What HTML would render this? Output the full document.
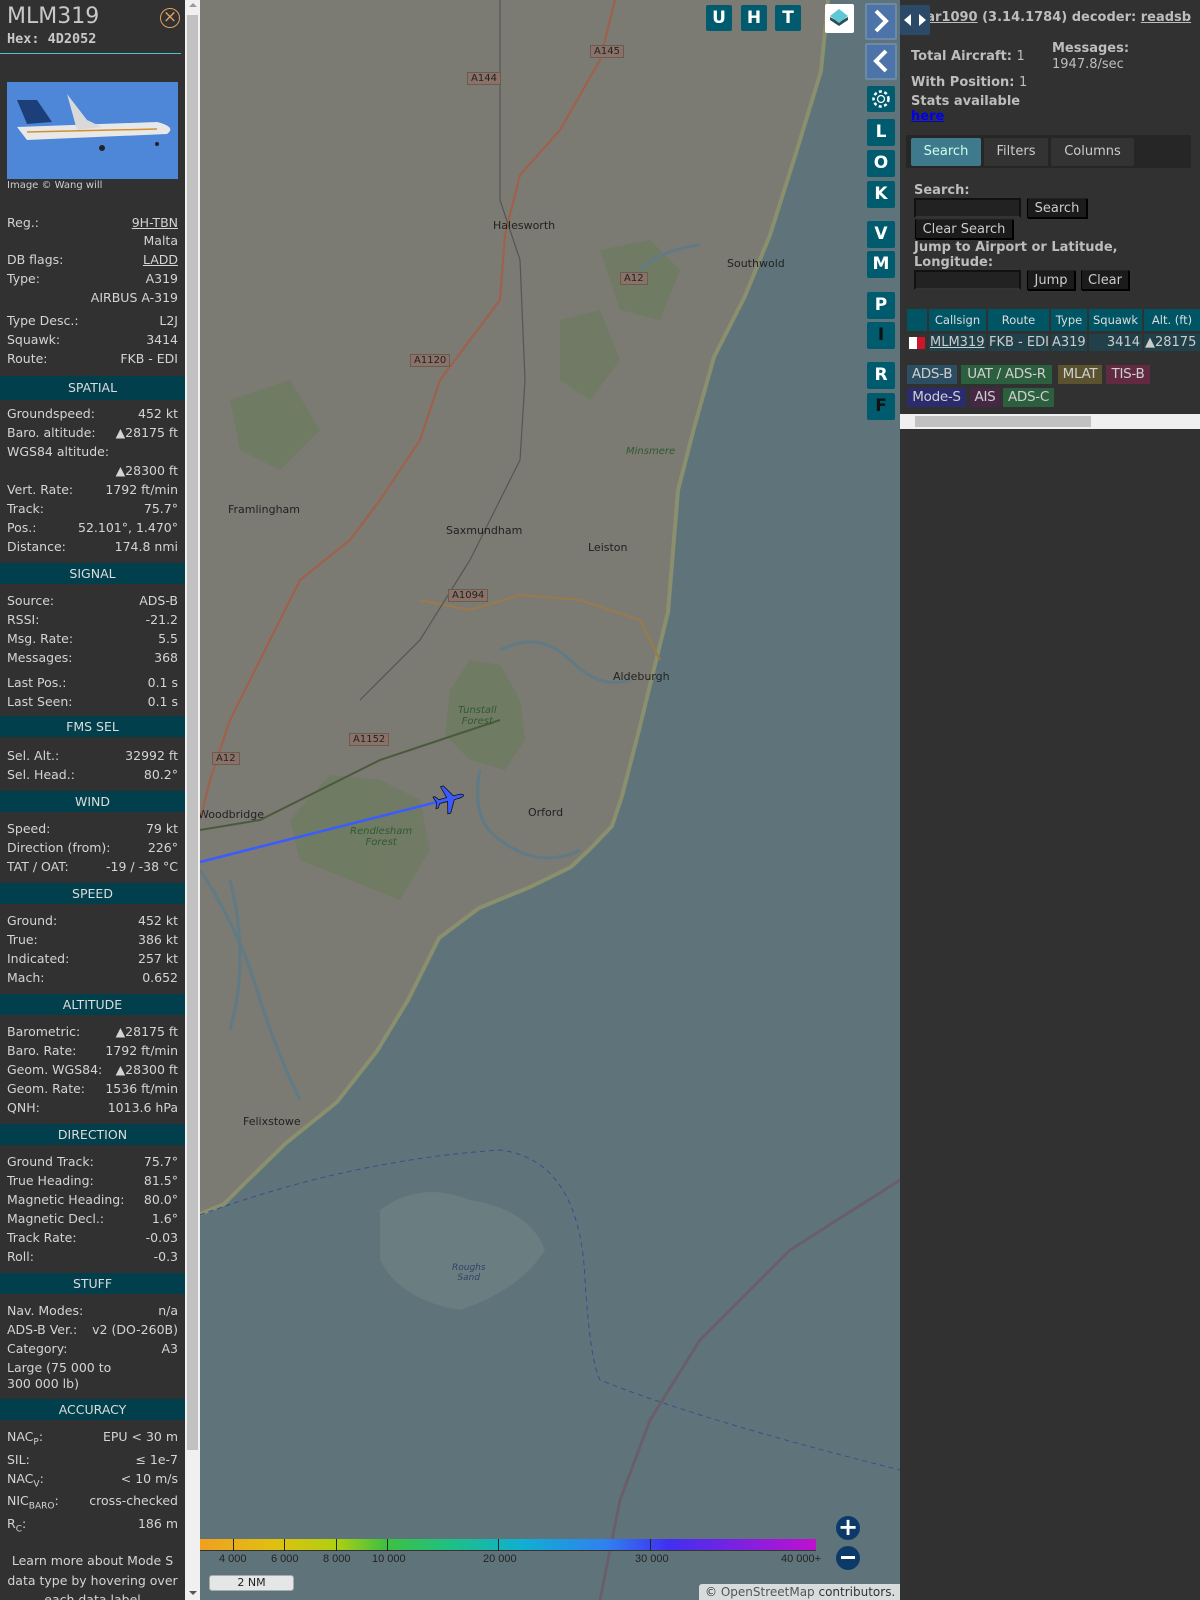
<!DOCTYPE html>
<html><head><meta charset="utf-8"><style>
*{box-sizing:border-box;margin:0;padding:0}
body{width:1200px;height:1600px;overflow:hidden;background:#5f747a;font-family:"DejaVu Sans","Liberation Sans",sans-serif;position:relative}
#lp{position:absolute;left:0;top:0;width:185px;height:1600px;background:#313131;color:#d4d4d4;font-size:12.5px;overflow:hidden}
.r{position:absolute;left:7px;right:7px;height:19px;line-height:19px;display:flex;justify-content:space-between;white-space:nowrap}
.h{position:absolute;left:0;width:185px;height:21px;line-height:21px;background:#003f4b;text-align:center;color:#dcdcdc;font-size:12.5px}
.u{text-decoration:underline}
#sb{position:absolute;left:185px;top:0;width:15px;height:1600px;background:#f0f0f0}
#rp{position:absolute;left:900px;top:0;width:300px;height:1600px;background:#313131;color:#bdbdbd;font-size:13px}
.ab{position:absolute;font-size:13px}
.btn{position:absolute;border:1px solid #000;border-top-color:#222;background:#1b1b1b;color:#ccc;font-size:13px;line-height:19px;text-align:center;box-shadow:1px 1px 0 #000}
.inp{position:absolute;background:#222;border:2px solid #111;border-bottom-color:#333}
.mb{position:absolute;width:28px;height:27px;background:#005b6e;color:#fff;font-weight:bold;font-size:17px;text-align:center;line-height:27px;border-radius:2px;font-family:"DejaVu Sans",sans-serif}
.tb{position:absolute;width:26px;height:26px;background:#005b6e;color:#fff;font-weight:bold;font-size:17px;text-align:center;line-height:26px;border-radius:2px}
.bd{position:absolute;height:19px;line-height:19px;padding:0 2px;font-size:13.5px;color:#cfcfcf;white-space:nowrap;overflow:hidden;text-align:center;letter-spacing:-0.3px}
.th{position:absolute;top:309px;height:22px;line-height:22px;background:#005565;color:#ddd;text-align:center;font-size:11.5px}
.td{position:absolute;top:334px;height:17px;line-height:17px;background:#22404a;color:#ccc;font-size:13px}
.tl{position:absolute;font-size:11px;color:#222;font-family:"Liberation Sans",sans-serif}
</style></head><body>
<svg width="1200" height="1600" style="position:absolute;left:0;top:0">
<rect x="200" y="0" width="700" height="1600" fill="#5f747a"/>
<path d="M200,0 L828,0 L821,71 L796,153 L770,235 L745,296 L714,357 L694,428 L678,490 L673,551 L668,612 L653,673 L638,734 L622,796 L612,826 L592,847 L571,867 L530,887 L479,908 L439,938 L408,1000 L377,1051 L337,1102 L286,1143 L245,1183 L224,1204 L200,1214 Z" fill="#7b7a73"/>
<path d="M828,0 L821,71 L796,153 L770,235 L745,296 L714,357 L694,428 L678,490 L673,551 L668,612 L653,673 L638,734 L622,796 L612,826 L592,847 L571,867 L530,887 L479,908 L439,938 L408,1000 L377,1051 L337,1102 L286,1143 L245,1183 L224,1204 L200,1214" fill="none" stroke="#8a8f6e" stroke-width="4"/>
<g fill="#6f7b63" opacity="0.9">
<path d="M450,690 L470,660 L500,665 L520,700 L525,740 L505,770 L470,760 L445,735 Z"/>
<path d="M290,820 L330,775 L380,780 L420,800 L430,850 L400,900 L350,880 L300,860 Z"/>
<path d="M600,250 L650,240 L680,270 L660,320 L620,310 Z"/>
<path d="M560,320 L600,310 L620,360 L590,400 L560,380 Z"/>
<path d="M230,400 L290,380 L320,430 L280,470 L240,450 Z"/>
</g>
<g fill="none" stroke="#607a86" stroke-width="3">
<path d="M640,270 Q660,250 700,245"/>
<path d="M500,650 Q540,630 570,660 Q600,690 630,680"/>
<path d="M480,770 Q470,820 500,840 Q540,870 580,850"/>
<path d="M200,870 Q240,930 260,1000 Q280,1060 300,1100"/>
<path d="M230,880 Q250,960 230,1030"/>
</g>
<g fill="none" stroke-width="2">
<path d="M615,0 L600,60 L560,130 L520,175 L505,235 L500,300 L470,340 L440,380 L420,440 L380,500 L350,540 L300,580 L270,640 L230,720 L210,780 L200,820" stroke="#a35f47"/>
<path d="M420,600 L470,610 L520,595 L580,600 L640,620 L660,660" stroke="#9a7a4a"/>
<path d="M200,830 L260,820 L320,790 L380,760 L440,740 L500,720" stroke="#4a5a3c"/>
<path d="M500,0 L500,200 L520,260 L525,380 L520,460 L470,560 L420,640 L360,700" stroke="#555" stroke-width="1.2"/>
</g>
<path d="M380,1210 Q420,1180 470,1200 Q530,1210 545,1250 Q520,1290 460,1310 Q400,1300 380,1260 Z" fill="#6a7d80"/>
<path d="M900,1180 L790,1250 L700,1340 L650,1420 L620,1500 L600,1600" fill="none" stroke="#6b5e6b" stroke-width="3"/>
<path d="M200,1215 Q350,1160 500,1150 Q580,1160 585,1280 Q590,1360 600,1380 Q700,1420 900,1470" fill="none" stroke="#3c4c8a" stroke-width="1" stroke-dasharray="5,4"/>
<path d="M200,862 L449,799" stroke="#3a5cff" stroke-width="2.5"/>
<g transform="translate(449,799) rotate(75)" fill="#3a5cff" stroke="#111" stroke-width="0.8">
<path d="M0,-15 C2,-15 2,-10 2,-5 L14,2 L14,5 L2,2 L2,10 L6,13 L6,15 L0,13 L-6,15 L-6,13 L-2,10 L-2,2 L-14,5 L-14,2 L-2,-5 C-2,-10 -2,-15 0,-15 Z"/>
</g>
</svg>
<div style="position:absolute;left:200px;top:0;width:700px;height:1600px;font-size:11px;color:#222;font-family:'DejaVu Sans',sans-serif">
<div style="position:absolute;left:293px;top:219px">Halesworth</div>
<div style="position:absolute;left:527px;top:257px">Southwold</div>
<div style="position:absolute;left:28px;top:503px">Framlingham</div>
<div style="position:absolute;left:246px;top:524px">Saxmundham</div>
<div style="position:absolute;left:388px;top:541px">Leiston</div>
<div style="position:absolute;left:413px;top:670px">Aldeburgh</div>
<div style="position:absolute;left:328px;top:806px">Orford</div>
<div style="position:absolute;left:-2px;top:808px">Woodbridge</div>
<div style="position:absolute;left:43px;top:1115px">Felixstowe</div>
<div style="position:absolute;left:426px;top:446px;font-style:italic;color:#2f5a2f;font-size:10px">Minsmere</div>
<div style="position:absolute;left:258px;top:705px;font-style:italic;color:#2f5a2f;font-size:10px;text-align:center">Tunstall<br>Forest</div>
<div style="position:absolute;left:150px;top:826px;font-style:italic;color:#2f5a2f;font-size:10px;text-align:center">Rendlesham<br>Forest</div>
<div style="position:absolute;left:252px;top:1263px;font-style:italic;color:#2e4468;font-size:9px;text-align:center">Roughs<br>Sand</div>
<div style="position:absolute;left:390px;top:45px;background:#8a7268;border:1px solid #6a5a50;padding:0 3px;font-size:10px">A145</div>
<div style="position:absolute;left:267px;top:72px;background:#8a7268;border:1px solid #6a5a50;padding:0 3px;font-size:10px">A144</div>
<div style="position:absolute;left:420px;top:272px;background:#8a7268;border:1px solid #6a5a50;padding:0 3px;font-size:10px">A12</div>
<div style="position:absolute;left:210px;top:354px;background:#8a7268;border:1px solid #6a5a50;padding:0 3px;font-size:10px">A1120</div>
<div style="position:absolute;left:248px;top:589px;background:#8a7268;border:1px solid #6a5a50;padding:0 3px;font-size:10px">A1094</div>
<div style="position:absolute;left:149px;top:733px;background:#8a7268;border:1px solid #6a5a50;padding:0 3px;font-size:10px">A1152</div>
<div style="position:absolute;left:12px;top:752px;background:#8a7268;border:1px solid #6a5a50;padding:0 3px;font-size:10px">A12</div>
</div>
<div style="position:absolute;left:200px;top:1539px;width:616px;height:12px;background:linear-gradient(90deg,#f0a020 0%,#e0c010 12%,#b0d010 22%,#40c040 30%,#20c080 40%,#10b0d0 52%,#3080f0 66%,#4030f0 76%,#8020e0 88%,#c010d0 100%);border-bottom:1px solid #333"></div>
<div style="position:absolute;top:1539px;height:12px;left:233px;width:1px;background:#222"></div>
<div style="position:absolute;top:1539px;height:12px;left:284px;width:1px;background:#222"></div>
<div style="position:absolute;top:1539px;height:12px;left:336px;width:1px;background:#222"></div>
<div style="position:absolute;top:1539px;height:12px;left:387px;width:1px;background:#222"></div>
<div style="position:absolute;top:1539px;height:12px;left:498px;width:1px;background:#222"></div>
<div style="position:absolute;top:1539px;height:12px;left:650px;width:1px;background:#222"></div>
<div class="tl" style="left:219px;top:1553px">4 000</div>
<div class="tl" style="left:271px;top:1553px">6 000</div>
<div class="tl" style="left:323px;top:1553px">8 000</div>
<div class="tl" style="left:372px;top:1553px">10 000</div>
<div class="tl" style="left:483px;top:1553px">20 000</div>
<div class="tl" style="left:635px;top:1553px">30 000</div>
<div class="tl" style="left:781px;top:1553px">40 000+</div>
<div style="position:absolute;left:209px;top:1575px;width:85px;height:16px;background:#e4e6e8;border:1px solid #aaa;border-radius:3px;font-size:11px;text-align:center;line-height:14px;color:#222">2 NM</div>
<div style="position:absolute;left:699px;top:1584px;width:201px;height:16px;background:#d8dcdd;font-size:12px;line-height:16px;padding-left:6px;color:#333;border-radius:3px 0 0 0">© <span style="color:#555">OpenStreetMap</span> contributors.</div>
<div style="position:absolute;left:836px;top:1516px;width:24px;height:24px;border-radius:12px;background:#0c3a68;color:#fff;font-size:24px;line-height:23px;text-align:center;font-weight:bold">+</div>
<div style="position:absolute;left:836px;top:1546px;width:24px;height:24px;border-radius:12px;background:#0c3a68"><div style="position:absolute;left:5px;top:10px;width:14px;height:3px;background:#fff"></div></div>
<div class="tb" style="left:706px;top:5px">U</div>
<div class="tb" style="left:741px;top:5px">H</div>
<div class="tb" style="left:775px;top:5px">T</div>
<div style="position:absolute;left:825px;top:4px;width:29px;height:29px;background:#fff;border-radius:2px">
<svg width="29" height="29"><path d="M14,18 L5,13 L5,16 L14,22 L23,16 L23,13 Z" fill="#2f4f55"/><path d="M14,5 L23,12 L14,19 L5,12 Z" fill="#5ec8d4"/></svg></div>
<div style="position:absolute;left:865px;top:3px;width:32px;height:37px;background:#6c8aa6;border-radius:2px"></div>
<div style="position:absolute;left:867px;top:5px;width:28px;height:33px;background:#4c74a8"><svg width="28" height="33"><path d="M9,6 L19,16 L9,26" fill="none" stroke="#fff" stroke-width="4"/></svg></div>
<div style="position:absolute;left:865px;top:43px;width:32px;height:37px;background:#6c8aa6;border-radius:2px"></div>
<div style="position:absolute;left:867px;top:45px;width:28px;height:33px;background:#4c74a8"><svg width="28" height="33"><path d="M19,6 L9,16 L19,26" fill="none" stroke="#fff" stroke-width="4"/></svg></div>
<div class="mb" style="left:867px;top:86px;height:26px"><svg width="28" height="26"><circle cx="14" cy="13" r="3.5" fill="none" stroke="#fff" stroke-width="1.3"/><circle cx="14" cy="13" r="7.5" fill="none" stroke="#fff" stroke-width="2.5" stroke-dasharray="3,2.5"/></svg></div>
<div class="mb" style="left:867px;top:119px">L</div>
<div class="mb" style="left:867px;top:150px">O</div>
<div class="mb" style="left:867px;top:181px">K</div>
<div class="mb" style="left:867px;top:221px">V</div>
<div class="mb" style="left:867px;top:251px">M</div>
<div class="mb" style="left:867px;top:292px">P</div>
<div class="mb" style="left:867px;top:322px;color:#111">I</div>
<div class="mb" style="left:867px;top:362px">R</div>
<div class="mb" style="left:867px;top:393px;color:#111">F</div>
<div id="lp">
<div style="position:absolute;left:7px;top:4px;font-size:22px;color:#c8c8c8">MLM319</div>
<div style="position:absolute;left:7px;top:31px;font-size:13.5px;font-weight:bold;font-family:'DejaVu Sans Mono',monospace;color:#c8c8c8">Hex: 4D2052</div>
<div style="position:absolute;left:160px;top:8px;width:20px;height:20px;border:1.5px solid #e0a060;border-radius:10px;color:#e0a060;text-align:center;line-height:16px;font-size:17px">×</div>
<div style="position:absolute;left:0;top:53px;width:181px;height:1px;background:#4fc3cb"></div>
<div style="position:absolute;left:7px;top:82px;width:171px;height:97px;background:#4f87d8">
<svg width="171" height="97"><path d="M10,45 L150,40 Q170,45 160,52 L20,58 Z" fill="#e8e8e8"/><path d="M10,18 L30,18 L45,40 L20,42 Z" fill="#1c3f7a"/><path d="M60,12 L80,38 L95,45 L70,48 Z" fill="#d9d9d9"/><path d="M20,50 L150,47" stroke="#d09030" stroke-width="1.5"/><circle cx="95" cy="66" r="3" fill="#222"/><circle cx="150" cy="62" r="2" fill="#222"/></svg></div>
<div style="position:absolute;left:7px;top:180px;font-size:10px;color:#ccc">Image © Wang will</div>
<div class="r" style="top:213px"><span>Reg.:</span><span class="u">9H-TBN</span></div>
<div class="r" style="top:231px"><span></span><span>Malta</span></div>
<div class="r" style="top:250px"><span>DB flags:</span><span class="u">LADD</span></div>
<div class="r" style="top:269px"><span>Type:</span><span>A319</span></div>
<div class="r" style="top:288px"><span></span><span>AIRBUS A-319</span></div>
<div class="r" style="top:311px"><span>Type Desc.:</span><span>L2J</span></div>
<div class="r" style="top:330px"><span>Squawk:</span><span>3414</span></div>
<div class="r" style="top:349px"><span>Route:</span><span>FKB - EDI</span></div>
<div class="h" style="top:376px;height:24px;line-height:24px">SPATIAL</div>
<div class="r" style="top:404px"><span>Groundspeed:</span><span>452 kt</span></div>
<div class="r" style="top:423px"><span>Baro. altitude:</span><span>▲28175 ft</span></div>
<div class="r" style="top:442px"><span>WGS84 altitude:</span><span></span></div>
<div class="r" style="top:461px"><span></span><span>▲28300 ft</span></div>
<div class="r" style="top:480px"><span>Vert. Rate:</span><span>1792 ft/min</span></div>
<div class="r" style="top:499px"><span>Track:</span><span>75.7°</span></div>
<div class="r" style="top:518px"><span>Pos.:</span><span>52.101°, 1.470°</span></div>
<div class="r" style="top:537px"><span>Distance:</span><span>174.8 nmi</span></div>
<div class="h" style="top:563px">SIGNAL</div>
<div class="r" style="top:591px"><span>Source:</span><span>ADS-B</span></div>
<div class="r" style="top:610px"><span>RSSI:</span><span>-21.2</span></div>
<div class="r" style="top:629px"><span>Msg. Rate:</span><span>5.5</span></div>
<div class="r" style="top:648px"><span>Messages:</span><span>368</span></div>
<div class="r" style="top:673px"><span>Last Pos.:</span><span>0.1 s</span></div>
<div class="r" style="top:692px"><span>Last Seen:</span><span>0.1 s</span></div>
<div class="h" style="top:716px">FMS SEL</div>
<div class="r" style="top:746px"><span>Sel. Alt.:</span><span>32992 ft</span></div>
<div class="r" style="top:765px"><span>Sel. Head.:</span><span>80.2°</span></div>
<div class="h" style="top:791px">WIND</div>
<div class="r" style="top:819px"><span>Speed:</span><span>79 kt</span></div>
<div class="r" style="top:838px"><span>Direction (from):</span><span>226°</span></div>
<div class="r" style="top:857px"><span>TAT / OAT:</span><span>-19 / -38 °C</span></div>
<div class="h" style="top:883px">SPEED</div>
<div class="r" style="top:911px"><span>Ground:</span><span>452 kt</span></div>
<div class="r" style="top:930px"><span>True:</span><span>386 kt</span></div>
<div class="r" style="top:949px"><span>Indicated:</span><span>257 kt</span></div>
<div class="r" style="top:968px"><span>Mach:</span><span>0.652</span></div>
<div class="h" style="top:994px">ALTITUDE</div>
<div class="r" style="top:1022px"><span>Barometric:</span><span>▲28175 ft</span></div>
<div class="r" style="top:1041px"><span>Baro. Rate:</span><span>1792 ft/min</span></div>
<div class="r" style="top:1060px"><span>Geom. WGS84:</span><span>▲28300 ft</span></div>
<div class="r" style="top:1079px"><span>Geom. Rate:</span><span>1536 ft/min</span></div>
<div class="r" style="top:1098px"><span>QNH:</span><span>1013.6 hPa</span></div>
<div class="h" style="top:1124px">DIRECTION</div>
<div class="r" style="top:1152px"><span>Ground Track:</span><span>75.7°</span></div>
<div class="r" style="top:1171px"><span>True Heading:</span><span>81.5°</span></div>
<div class="r" style="top:1190px"><span>Magnetic Heading:</span><span>80.0°</span></div>
<div class="r" style="top:1209px"><span>Magnetic Decl.:</span><span>1.6°</span></div>
<div class="r" style="top:1228px"><span>Track Rate:</span><span>-0.03</span></div>
<div class="r" style="top:1247px"><span>Roll:</span><span>-0.3</span></div>
<div class="h" style="top:1273px">STUFF</div>
<div class="r" style="top:1301px"><span>Nav. Modes:</span><span>n/a</span></div>
<div class="r" style="top:1320px"><span>ADS-B Ver.:</span><span>v2 (DO-260B)</span></div>
<div class="r" style="top:1339px"><span>Category:</span><span>A3</span></div>
<div class="r" style="top:1358px"><span>Large (75 000 to</span><span></span></div>
<div class="r" style="top:1374px"><span>300 000 lb)</span><span></span></div>
<div class="h" style="top:1399px">ACCURACY</div>
<div class="r" style="top:1427px"><span>NAC<sub style="font-size:9px">P</sub>:</span><span>EPU &lt; 30 m</span></div>
<div class="r" style="top:1450px"><span>SIL:</span><span>≤ 1e-7</span></div>
<div class="r" style="top:1469px"><span>NAC<sub style="font-size:9px">V</sub>:</span><span>&lt; 10 m/s</span></div>
<div class="r" style="top:1491px"><span>NIC<sub style="font-size:9px">BARO</sub>:</span><span>cross-checked</span></div>
<div class="r" style="top:1514px"><span>R<sub style="font-size:9px">C</sub>:</span><span>186 m</span></div>
<div style="position:absolute;left:0;width:185px;top:1551px;text-align:center;line-height:19.5px;font-size:12.5px">Learn more about Mode S<br>data type by hovering over<br>each data label</div>
</div>
<div id="sb"><div style="position:absolute;left:2px;top:15px;width:11px;height:1435px;background:#c1c1c1"></div>
<div style="position:absolute;left:4px;top:3px;width:0;height:0;border:4px solid transparent;border-bottom-color:#999;border-top:0"></div>
<div style="position:absolute;left:4px;top:1591px;width:0;height:0;border:4px solid transparent;border-top-color:#555;border-bottom:0"></div></div>
<div id="rp">
<div class="ab" style="left:20px;top:10px;font-weight:bold;font-size:13px;white-space:nowrap"><span class="u">tar1090</span> (3.14.1784) decoder: <span class="u">readsb</span></div>
<div style="position:absolute;left:0;top:5px;width:30px;height:30px;background:#2b4a68;border-radius:2px"><svg width="30" height="30"><path d="M4,15 L11,9 L11,21Z M26,15 L19,9 L19,21Z" fill="#fff"/></svg></div>
<div class="ab" style="left:11px;top:49px;font-weight:bold">Total Aircraft: <span style="font-weight:normal">1</span></div>
<div class="ab" style="left:152px;top:41px;font-weight:bold">Messages:</div>
<div class="ab" style="left:152px;top:57px">1947.8/sec</div>
<div class="ab" style="left:11px;top:75px;font-weight:bold">With Position: <span style="font-weight:normal">1</span></div>
<div class="ab" style="left:11px;top:94px;font-weight:bold">Stats available</div>
<div class="ab" style="left:11px;top:109px;font-weight:bold;color:#0000ee;text-decoration:underline">here</div>
<div style="position:absolute;left:6px;top:135px;width:285px;height:33px;background:#262626;border-radius:2px"></div>
<div style="position:absolute;left:11px;top:138px;width:70px;height:28px;background:#3f7a8c;border-radius:2px;text-align:center;line-height:28px;color:#cfe">Search</div>
<div style="position:absolute;left:84px;top:138px;width:64px;height:28px;background:#333;border-radius:2px;text-align:center;line-height:28px;color:#ccc">Filters</div>
<div style="position:absolute;left:151px;top:138px;width:83px;height:28px;background:#333;border-radius:2px;text-align:center;line-height:28px;color:#ccc">Columns</div>
<div class="ab" style="left:14px;top:183px;font-weight:bold">Search:</div>
<div class="inp" style="left:14px;top:198px;width:107px;height:20px"></div>
<div class="btn" style="left:127px;top:198px;width:60px;height:20px">Search</div>
<div class="btn" style="left:15px;top:219px;width:98px;height:20px">Clear Search</div>
<div class="ab" style="left:14px;top:240px;font-weight:bold;line-height:15px">Jump to Airport or Latitude,<br>Longitude:</div>
<div class="inp" style="left:14px;top:270px;width:107px;height:20px"></div>
<div class="btn" style="left:127px;top:270px;width:48px;height:20px">Jump</div>
<div class="btn" style="left:181px;top:270px;width:48px;height:20px">Clear</div>
<div class="th" style="left:7px;width:20px"></div>
<div class="th" style="left:29px;width:57px">Callsign</div>
<div class="th" style="left:88px;width:61px">Route</div>
<div class="th" style="left:151px;width:36px">Type</div>
<div class="th" style="left:189px;width:53px">Squawk</div>
<div class="th" style="left:244px;width:56px">Alt. (ft)</div>
<div class="td" style="left:7px;width:20px;background:#333"><div style="position:absolute;left:2px;top:3px;width:16px;height:12px;background:#fff"><div style="position:absolute;left:8px;top:0;width:8px;height:12px;background:#cf142b"></div></div></div>
<div class="td" style="left:29px;width:57px;padding-left:1px;text-decoration:underline">MLM319</div>
<div class="td" style="left:88px;width:61px;padding-left:1px">FKB - EDI</div>
<div class="td" style="left:151px;width:36px;padding-left:1px">A319</div>
<div class="td" style="left:189px;width:53px;text-align:right;padding-right:2px">3414</div>
<div class="td" style="left:244px;width:56px;padding-left:1px">▲28175</div>
<div class="bd" style="left:7px;top:365px;width:50px;background:#2b4e63">ADS-B</div>
<div class="bd" style="left:61px;top:365px;width:91px;background:#2b5f3e">UAT / ADS-R</div>
<div class="bd" style="left:158px;top:365px;width:44px;background:#5b5330">MLAT</div>
<div class="bd" style="left:206px;top:365px;width:44px;background:#622a40">TIS-B</div>
<div class="bd" style="left:7px;top:388px;width:59px;background:#2a2c6e">Mode-S</div>
<div class="bd" style="left:70px;top:388px;width:30px;background:#462845">AIS</div>
<div class="bd" style="left:103px;top:388px;width:51px;background:#2b5f3e">ADS-C</div>
<div style="position:absolute;left:0;top:414px;width:300px;height:15px;background:#f0f0f0"><div style="position:absolute;left:15px;top:2px;width:176px;height:11px;background:#c1c1c1"></div></div>
</div>
</body></html>
